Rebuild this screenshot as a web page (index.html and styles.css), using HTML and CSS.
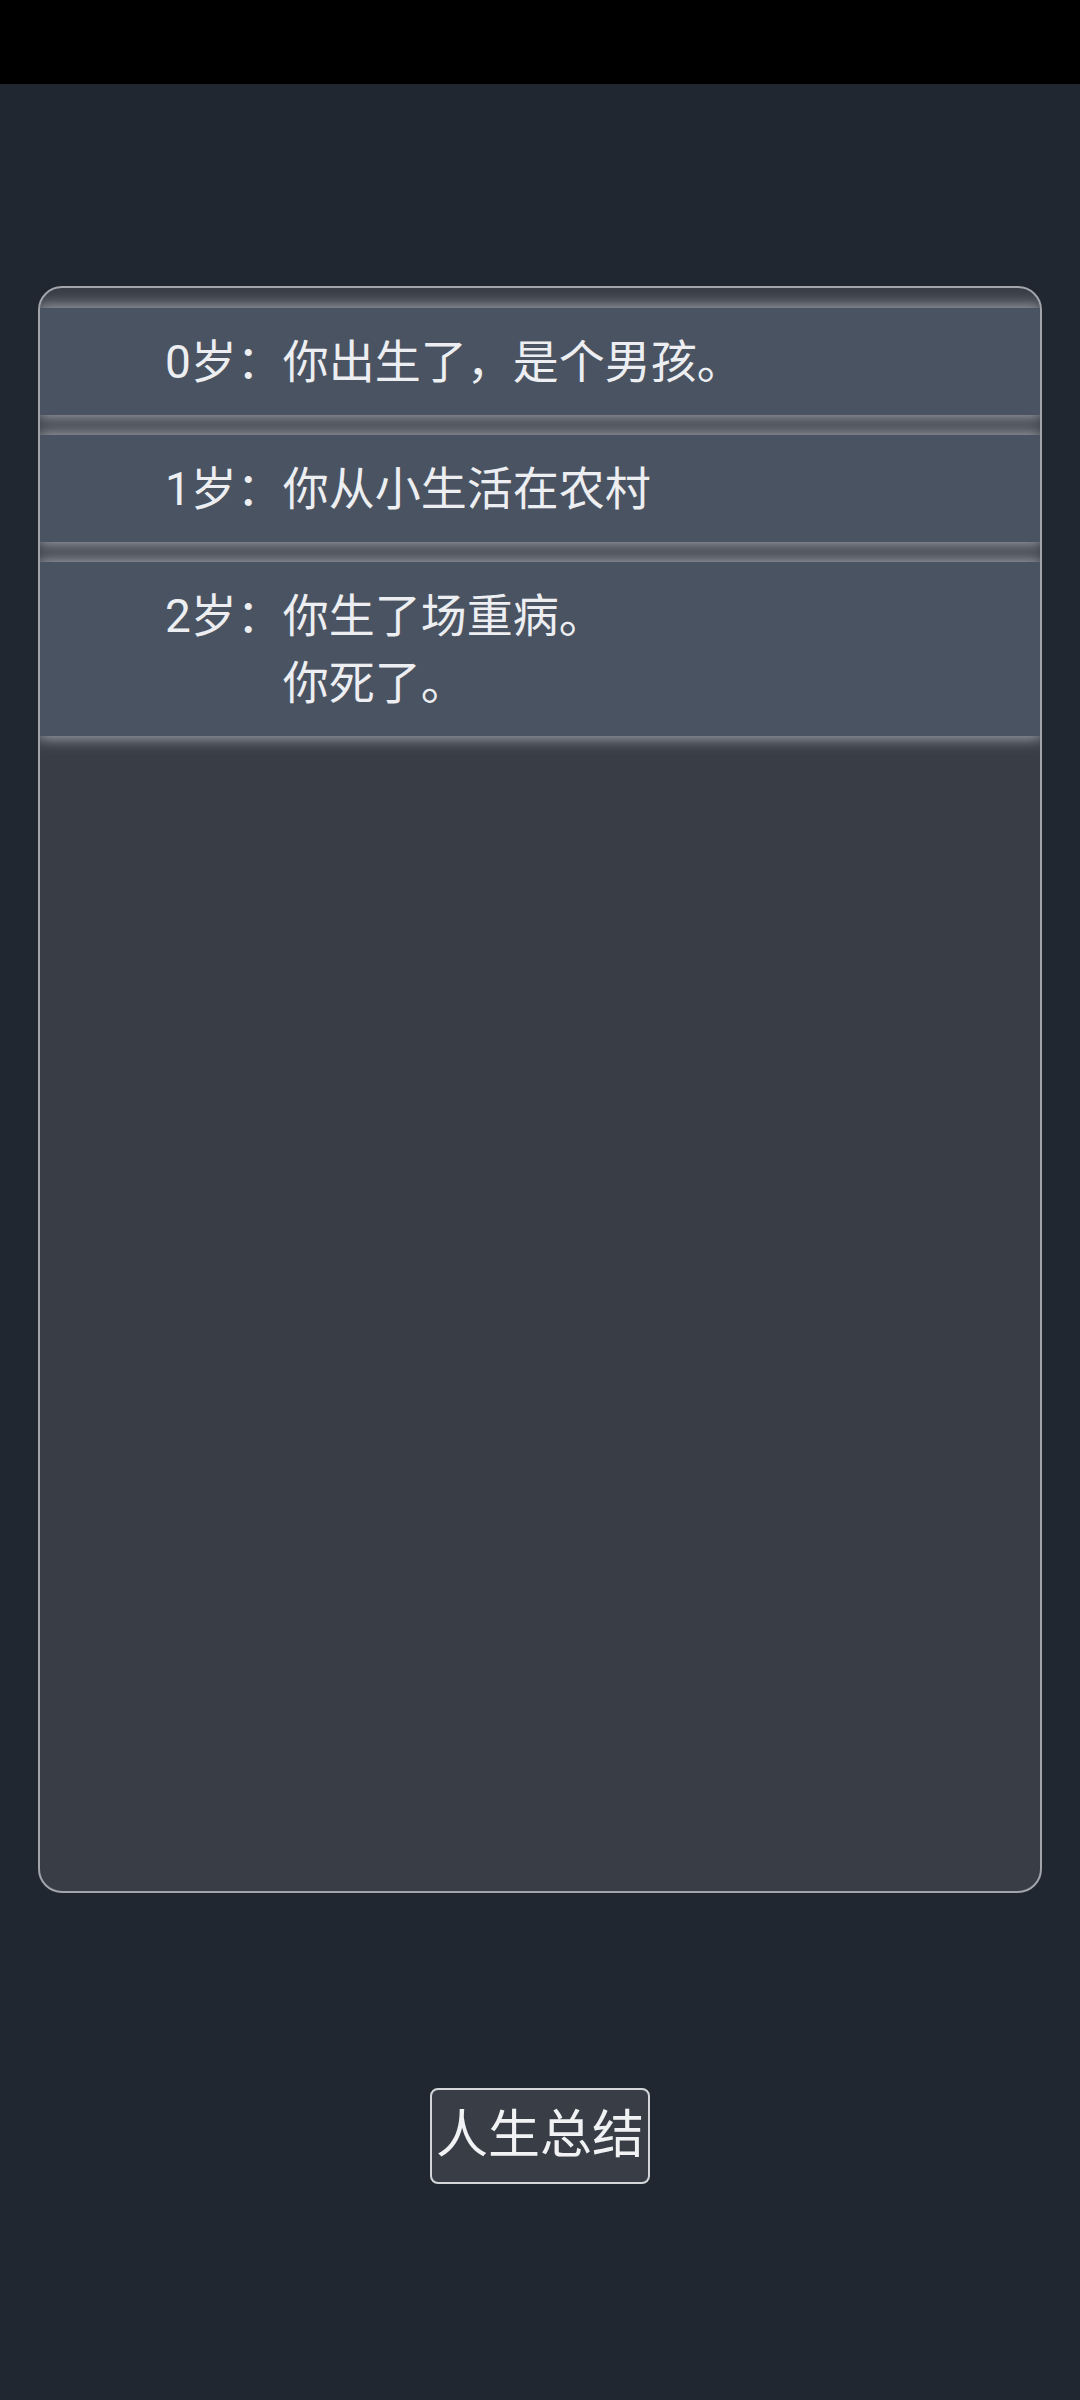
FILE: index.html
```html
<!DOCTYPE html>
<html lang="zh-CN">
<head>
    <meta charset="UTF-8">
    <meta name="viewport" content="width=device-width, initial-scale=1.0">
    <title>人生重开</title>
    <link rel="stylesheet" href="styles.css">
</head>
<body>
<div class="status-bar"></div>

<main class="page">
    <section class="life-card">
        <ul class="event-list">
            <li class="event">
                <span class="age">0岁：</span>
                <div class="event-text">
                    <p>你出生了，是个男孩。</p>
                </div>
            </li>
            <li class="event">
                <span class="age">1岁：</span>
                <div class="event-text">
                    <p>你从小生活在农村</p>
                </div>
            </li>
            <li class="event">
                <span class="age">2岁：</span>
                <div class="event-text">
                    <p>你生了场重病。</p>
                    <p>你死了。</p>
                </div>
            </li>
        </ul>
    </section>

    <div class="actions">
        <button class="summary-button">人生总结</button>
    </div>
</main>
</body>
</html>
```

FILE: styles.css
```css
body {
    margin: 0;
    padding: 0;
    font-family: Roboto, "Noto Sans CJK SC", sans-serif;
    color: #eceef1;
    background-color: #212731;
    overflow-x: hidden;
}
.status-bar {
    height: 84px;
    background: #000;
}
.page {
    display: flex;
    flex-direction: column;
    align-items: stretch;
    padding: 202px 38px 0;
}
.life-card {
    box-sizing: border-box;
    height: 1607px;
    background-color: #393d46;
    border: 2px solid #a2a5ab;
    border-radius: 24px;
    overflow: hidden;
}
.event-list {
    list-style: none;
    margin: 0;
    padding: 20px 0 0;
    display: flex;
    flex-direction: column;
    gap: 20px;
}
.event {
    display: flex;
    padding: 21px 0 19px 125px;
    font-size: 46px;
    line-height: 67px;
    background-color: #4a5361;
    box-shadow: 0 0 14px 2px rgba(196, 199, 205, 0.8);
}
.event-text p {
    margin: 0;
}
.actions {
    display: flex;
    justify-content: center;
    margin-top: 195px;
}
.summary-button {
    font-family: Roboto, "Noto Sans CJK SC", sans-serif;
    font-size: 52px;
    line-height: 72px;
    padding: 10px 4px;
    color: #f1f2f4;
    background-color: #393d46;
    border: 2px solid #d4d6da;
    border-radius: 8px;
}
```
